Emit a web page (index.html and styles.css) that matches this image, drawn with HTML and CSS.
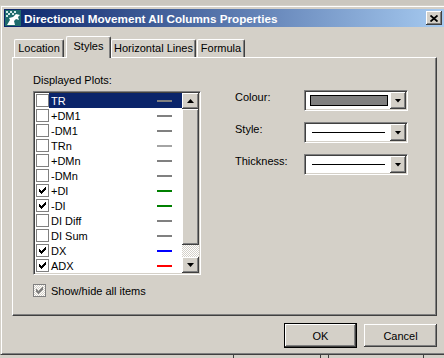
FILE: index.html
```html
<!DOCTYPE html>
<html lang="en">
<head>
  <meta charset="UTF-8">
  <title>Directional Movement All Columns Properties</title>
  <link rel="stylesheet" href="styles.css">
</head>
<body>
  <div class="window">
    <div class="titlebar">
      <svg class="app-icon" width="16" height="16" viewBox="0 0 16 16">
        <rect width="16" height="16" fill="#1d6b6c"/>
        <path d="M1 1h2v2H1zM5 1h2v2H5zM9 1h2v2H9zM3 3h2v2H3zM7 3h2v2H7zM1 5h2v2H1z" fill="#cfe6e6"/>
        <path d="M2 15L5 10L4 8L8 7L11 4L15 5L13 7L14 10L11 9L9 11L10 15Z" fill="#fff"/>
      </svg>
      <span class="title">Directional Movement All Columns Properties</span>
      <span class="close-btn">
        <svg width="8" height="7" viewBox="0 0 8 7"><path d="M0.5 0.5L7.5 6.5M7.5 0.5L0.5 6.5" stroke="#000" stroke-width="1.8"/></svg>
      </span>
    </div>

    <div class="tabs">
      <span class="tab tab-location">Location</span>
      <span class="tab tab-styles active">Styles</span>
      <span class="tab tab-lines">Horizontal Lines</span>
      <span class="tab tab-formula">Formula</span>
    </div>

    <div class="panel">
      <div class="plots">
        <p class="caption">Displayed Plots:</p>
        <div class="listbox">
          <ul class="list">
            <li class="selected"><span class="check"></span><span class="name">TR<i class="sample"></i></span></li>
            <li><span class="check"></span><span class="name">+DM1<i class="sample"></i></span></li>
            <li><span class="check"></span><span class="name">-DM1<i class="sample"></i></span></li>
            <li><span class="check"></span><span class="name">TRn<i class="sample light"></i></span></li>
            <li><span class="check"></span><span class="name">+DMn<i class="sample"></i></span></li>
            <li><span class="check"></span><span class="name">-DMn<i class="sample"></i></span></li>
            <li><span class="check"><svg width="11" height="11" viewBox="0 0 11 11"><path d="M2 4h1v3h-1zM3 5h1v3h-1zM4 6h1v3h-1zM5 5h1v3h-1zM6 4h1v3h-1zM7 3h1v3h-1zM8 2h1v3h-1z"/></svg></span><span class="name">+DI<i class="sample green"></i></span></li>
            <li><span class="check"><svg width="11" height="11" viewBox="0 0 11 11"><path d="M2 4h1v3h-1zM3 5h1v3h-1zM4 6h1v3h-1zM5 5h1v3h-1zM6 4h1v3h-1zM7 3h1v3h-1zM8 2h1v3h-1z"/></svg></span><span class="name">-DI<i class="sample green"></i></span></li>
            <li><span class="check"></span><span class="name">DI Diff<i class="sample"></i></span></li>
            <li><span class="check"></span><span class="name">DI Sum<i class="sample"></i></span></li>
            <li><span class="check"><svg width="11" height="11" viewBox="0 0 11 11"><path d="M2 4h1v3h-1zM3 5h1v3h-1zM4 6h1v3h-1zM5 5h1v3h-1zM6 4h1v3h-1zM7 3h1v3h-1zM8 2h1v3h-1z"/></svg></span><span class="name">DX<i class="sample blue"></i></span></li>
            <li><span class="check"><svg width="11" height="11" viewBox="0 0 11 11"><path d="M2 4h1v3h-1zM3 5h1v3h-1zM4 6h1v3h-1zM5 5h1v3h-1zM6 4h1v3h-1zM7 3h1v3h-1zM8 2h1v3h-1z"/></svg></span><span class="name">ADX<i class="sample red"></i></span></li>
          </ul>
          <div class="scrollbar">
            <span class="sb-btn up"></span>
            <span class="sb-thumb"></span>
            <span class="sb-track"></span>
            <span class="sb-btn down"></span>
          </div>
        </div>
        <div class="showall">
          <span class="check disabled"><svg width="11" height="11" viewBox="0 0 11 11"><path d="M2 4h1v3h-1zM3 5h1v3h-1zM4 6h1v3h-1zM5 5h1v3h-1zM6 4h1v3h-1zM7 3h1v3h-1zM8 2h1v3h-1z"/></svg></span>
          <span>Show/hide all items</span>
        </div>
      </div>

      <div class="props">
        <span class="prop-label">Colour:</span>
        <div class="combo"><span class="swatch"></span><span class="drop"></span></div>
        <span class="prop-label">Style:</span>
        <div class="combo"><span class="line"></span><span class="drop"></span></div>
        <span class="prop-label">Thickness:</span>
        <div class="combo"><span class="line"></span><span class="drop"></span></div>
      </div>
    </div>

    <div class="buttons">
      <span class="btn default">OK</span>
      <span class="btn">Cancel</span>
    </div>
  </div>
  <div class="taskbar">
    <span class="seg seg1"></span>
    <span class="seg seg2"></span>
    <span class="seg seg3"></span>
    <span class="seg seg4"></span>
    <span class="seg"></span>
  </div>
</body>
</html>
```

FILE: styles.css
```css
*{
  margin: 0;
  padding: 0;
  box-sizing: border-box;
}
body{
  width: 444px;
  height: 358px;
  overflow: hidden;
  background: #cbc7bf;
  font: 11px "Liberation Sans", Arial, sans-serif;
  color: #000;
}

/* window frame */
.window{
  margin-top: 5px;
  height: 350px;
  background: #d4d0c8;
  border-top: 1px solid #d4d0c8;
  border-left: 1px solid #d4d0c8;
  border-bottom: 1px solid #404040;
  box-shadow: inset 1px 1px #fff, inset 0 -1px #808080;
  padding: 3px 0 0 3px;
}
.titlebar{
  height: 18px;
  display: flex;
  align-items: center;
  padding-left: 1px;
  background: linear-gradient(to right, #0a246a, #a6caf0);
}
.app-icon{
  flex: none;
  margin-right: 3px;
}
.title{
  flex: 1;
  color: #fff;
  font-size: 11.7px;
  font-weight: bold;
  white-space: nowrap;
}
.close-btn{
  width: 16px;
  height: 14px;
  margin-right: 2px;
  display: flex;
  align-items: center;
  justify-content: center;
  background: #d4d0c8;
  box-shadow: inset -1px -1px #404040, inset 1px 1px #fff, inset -2px -2px #808080;
}

/* tabs */
.tabs{
  display: flex;
  align-items: flex-end;
  height: 21px;
  margin: 9px 0 0 10px;
}
.tab{
  height: 18px;
  line-height: 16px;
  text-align: center;
  background: #d4d0c8;
  border: 1px solid #fff;
  border-right-color: #404040;
  border-bottom: none;
  border-radius: 2px 2px 0 0;
  box-shadow: inset -1px 0 #808080;
}
.tab-location{
  width: 50px;
  margin-right: 2px;
}
.tab-styles{
  width: 45px;
}
.tab-lines{
  width: 85px;
  margin-right: 1px;
}
.tab-formula{
  width: 48px;
}
.tab.active{
  height: 22px;
  line-height: 18px;
  margin-bottom: -1px;
  position: relative;
  z-index: 1;
}

.panel{
  width: 425px;
  height: 259px;
  margin-left: 8px;
  display: flex;
  padding: 16px 0 0 20px;
  border: 1px solid #fff;
  border-right-color: #404040;
  border-bottom-color: #404040;
  box-shadow: inset -1px -1px #808080;
}

/* plot list */
.caption{
  height: 13px;
  line-height: 13px;
  margin-bottom: 4px;
}
.listbox{
  display: flex;
  width: 168px;
  height: 184px;
  padding: 1px;
  border: 1px solid #808080;
  border-right-color: #fff;
  border-bottom-color: #fff;
  box-shadow: inset 1px 1px #404040, inset -1px -1px #d4d0c8;
}
.list{
  list-style: none;
  width: 147px;
  background: #fff;
}
.list li{
  display: flex;
  align-items: center;
  height: 15px;
}
.check{
  flex: none;
  width: 13px;
  height: 13px;
  margin-left: 1px;
  border: 1px solid #808080;
  background: #fff;
}
.check svg{
  display: block;
  fill: #000;
}
.name{
  flex: 1;
  align-self: stretch;
  display: flex;
  align-items: center;
  padding-left: 2px;
  white-space: nowrap;
}
.selected .name{
  background: #0a246a;
  color: #fff;
}
.sample{
  width: 15px;
  height: 2px;
  margin: 0 10px 0 auto;
  background: #808080;
}
.sample.light{ background: #a4a4a4; }
.sample.green{ background: #008000; }
.sample.blue{ background: #0000ff; }
.sample.red{ background: #ff0000; }

.scrollbar{
  width: 17px;
  display: flex;
  flex-direction: column;
}
.sb-btn, .sb-thumb{
  background: #d4d0c8;
  box-shadow: inset -1px -1px #404040, inset 1px 1px #fff, inset -2px -2px #808080;
}
.sb-btn{
  height: 16px;
  display: flex;
  align-items: center;
  justify-content: center;
}
.sb-btn:after{
  content: '';
  width: 7px;
  height: 4px;
  background: #000;
}
.sb-btn.up:after{
  clip-path: polygon(50% 0, 100% 100%, 0 100%);
}
.sb-btn.down:after{
  clip-path: polygon(0 0, 100% 0, 50% 100%);
}
.sb-thumb{
  height: 136px;
}
.sb-track{
  flex: 1;
  background: conic-gradient(#d4d0c8 25%, #fff 0 50%, #d4d0c8 0 75%, #fff 0);
  background-size: 2px 2px;
}

.showall{
  display: flex;
  align-items: center;
  gap: 5px;
  margin-top: 9px;
}
.showall .check{
  margin-left: 0;
}
.check.disabled{
  background: conic-gradient(#d4d0c8 25%, #fff 0 50%, #d4d0c8 0 75%, #fff 0);
  background-size: 2px 2px;
}
.check.disabled svg{
  fill: #808080;
}

/* style properties */
.props{
  display: grid;
  grid-template-columns: 69px 104px;
  row-gap: 11px;
  align-content: start;
  margin: 16px 0 0 34px;
}
.prop-label{
  padding-top: 1px;
  line-height: 13px;
}
.combo{
  height: 21px;
  display: flex;
  align-items: center;
  padding: 1px;
  background: #fff;
  border: 1px solid #808080;
  border-right-color: #fff;
  border-bottom-color: #fff;
  box-shadow: inset 1px 1px #404040, inset -1px -1px #d4d0c8;
}
.swatch{
  width: 78px;
  height: 11px;
  margin-left: 4px;
  border: 1px solid #000;
  background: #808080;
}
.line{
  width: 73px;
  height: 1px;
  margin-left: 6px;
  background: #000;
}
.drop{
  width: 16px;
  height: 17px;
  margin-left: auto;
  display: flex;
  align-items: center;
  justify-content: center;
  background: #d4d0c8;
  box-shadow: inset -1px -1px #404040, inset 1px 1px #fff, inset -2px -2px #808080;
}
.drop:after{
  content: '';
  width: 7px;
  height: 4px;
  background: #000;
  clip-path: polygon(0 0, 100% 0, 50% 100%);
}

/* dialog buttons */
.buttons{
  width: 425px;
  margin: 7px 0 0 8px;
  display: flex;
  justify-content: flex-end;
  align-items: center;
  gap: 7px;
}
.btn{
  width: 73px;
  height: 23px;
  display: flex;
  align-items: center;
  justify-content: center;
  background: #d4d0c8;
  box-shadow: inset -1px -1px #404040, inset 1px 1px #fff, inset -2px -2px #808080;
}
.btn.default{
  height: 25px;
  border: 1px solid #000;
}

/* strip of the window underneath */
.taskbar{
  display: flex;
  height: 3px;
  background: #d4d0c8;
}
.seg{
  flex: 1;
  border-left: 1px solid #404040;
}
.seg1{ flex: none; width: 233px; border-left: none; }
.seg2{ flex: none; width: 87px; }
.seg3{ flex: none; width: 8px; }
.seg4{ flex: none; width: 95px; }
```
